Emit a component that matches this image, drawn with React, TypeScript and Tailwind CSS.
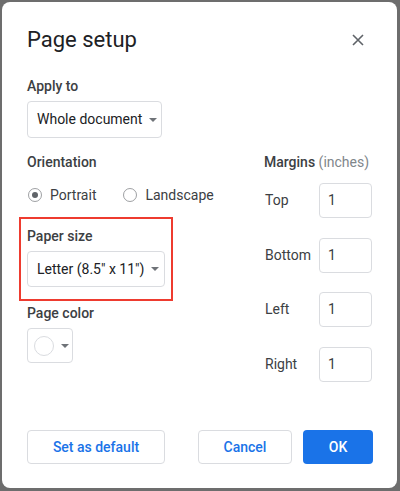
import React from "react";

const Caret = () => (
  <svg width="8" height="4" viewBox="0 0 8 4" className="ml-[7px]">
    <path d="M0 0 L8 0 L4 4 Z" fill="#6f7378" />
  </svg>
);

const Radio = ({ checked, label }: { checked?: boolean; label: string }) => (
  <label className="flex items-center">
    <span className="flex h-[14px] w-[14px] items-center justify-center rounded-full border-[1.5px] border-[#5f6368]/60">
      {checked && <span className="h-[6px] w-[6px] rounded-full bg-[#5f6368]" />}
    </span>
    <span className="ml-[8px] text-[14px] text-[#3c4043]">{label}</span>
  </label>
);

const MarginRow = ({ label }: { label: string }) => (
  <div className="flex items-center">
    <span className="w-[54px] text-[14px] text-[#3c4043]">{label}</span>
    <div className="flex h-[35px] w-[53px] items-center rounded border border-[#dadce0] pl-[8px] text-[14px] text-[#3c4043]">
      1
    </div>
  </div>
);

export default function App() {
  return (
    <div
      className="h-[491px] w-[400px] bg-[#6d6d6d] pb-[3px] pl-[2px] pr-[3px] pt-[2px]"
      style={{ fontFamily: "Roboto, 'Liberation Sans', sans-serif" }}
    >
      <div className="flex h-full flex-col rounded-lg bg-white pl-[25px] pr-[24px]">
        {/* Header */}
        <div className="mt-[24px] flex h-7 items-center justify-between">
          <h1 className="text-[22px] leading-7 text-[#202124]">Page setup</h1>
          <svg width="12" height="12" viewBox="0 0 12 12" className="mr-[9px]">
            <path d="M1 1 L11 11 M11 1 L1 11" stroke="#5f6368" strokeWidth="1.6" />
          </svg>
        </div>

        {/* Apply to */}
        <div className="mt-[22px] text-[14px] font-medium leading-5 text-[#3c4043]">Apply to</div>
        <div className="mt-[5px] flex h-[37px] w-[135px] items-center rounded border border-[#dadce0] pl-[9px] text-[14px] text-[#202124]">
          Whole document
          <Caret />
        </div>

        <div className="mt-[14px] flex">
          {/* Left column */}
          <div className="flex w-[237px] flex-col">
            <div className="text-[14px] font-medium leading-5 text-[#3c4043]">Orientation</div>
            <div className="mt-[13px] flex h-5 items-center gap-[27px] pl-[1px]">
              <Radio checked label="Portrait" />
              <Radio label="Landscape" />
            </div>

            <div className="-ml-[8px] mt-[12px] w-[154px] border-2 border-[#ee3b2f] pb-[12px] pl-[6px] pt-[7px]">
              <div className="text-[14px] font-medium leading-5 text-[#3c4043]">Paper size</div>
              <div className="mt-[5px] flex h-[36px] w-[138px] items-center rounded border border-[#dadce0] pl-[9px] text-[14px] text-[#202124]">
                Letter (8.5" x 11")
                <Caret />
              </div>
            </div>

            <div className="mt-[2px] text-[14px] font-medium leading-5 text-[#3c4043]">Page color</div>
            <div className="mt-[5px] flex h-[35px] w-[46px] items-center rounded border border-[#dadce0] pl-[6px]">
              <span className="h-[20px] w-[20px] rounded-full border border-[#dadce0]" />
              <Caret />
            </div>
          </div>

          {/* Right column */}
          <div className="flex flex-col">
            <div className="text-[14px] leading-5 text-[#80868b]">
              <span className="font-medium text-[#3c4043]">Margins</span> (inches)
            </div>
            <div className="mt-[11px] flex flex-col gap-[19.5px] pl-[1px]">
              <MarginRow label="Top" />
              <MarginRow label="Bottom" />
              <MarginRow label="Left" />
              <MarginRow label="Right" />
            </div>
          </div>
        </div>

        {/* Footer */}
        <div className="mb-[24px] mt-auto flex items-center">
          <button className="h-[34px] w-[138px] rounded border border-[#dadce0] text-[14px] font-medium text-[#1a73e8]">
            Set as default
          </button>
          <button className="ml-auto h-[34px] w-[94px] rounded border border-[#dadce0] text-[14px] font-medium text-[#1a73e8]">
            Cancel
          </button>
          <button className="ml-[11px] h-[34px] w-[70px] rounded bg-[#1a73e8] text-[14px] font-medium text-white">
            OK
          </button>
        </div>
      </div>
    </div>
  );
}
